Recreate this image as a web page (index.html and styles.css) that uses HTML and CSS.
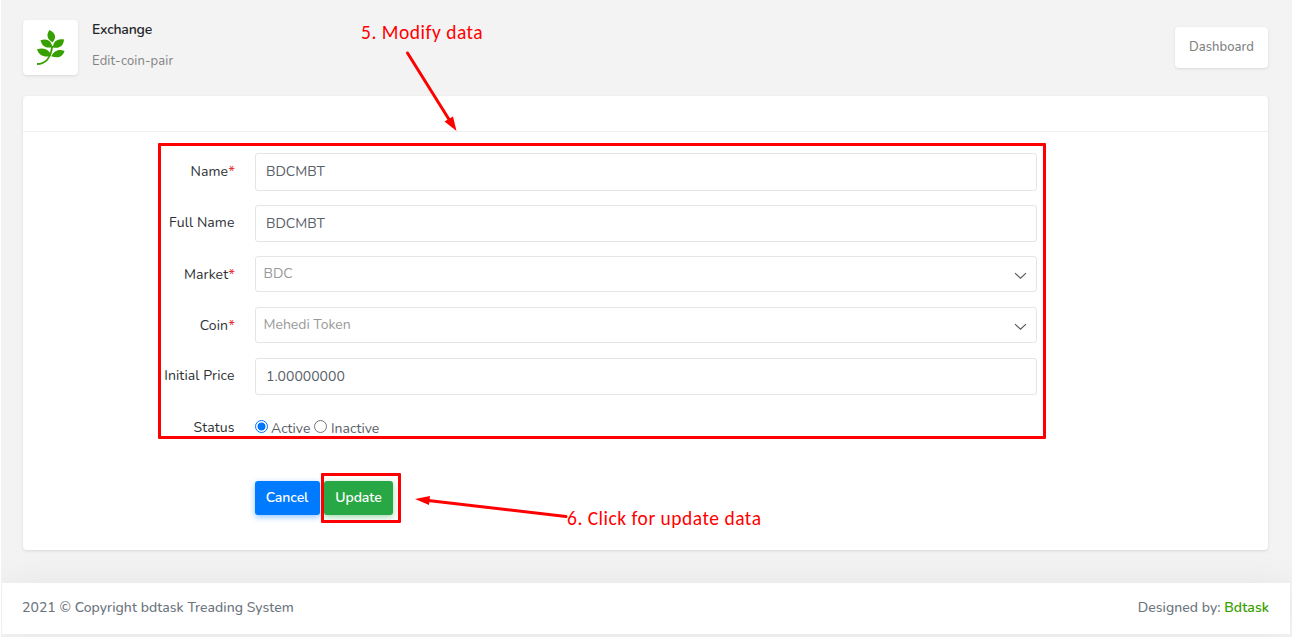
FILE: index.html
```html
<!DOCTYPE html>
<html lang="en">
<head>
<meta charset="utf-8">
<title>Exchange - Edit coin pair</title>
<link rel="stylesheet" href="styles.css">
</head>
<body>
<div class="page">
  <header class="header">
    <div class="brand-icon">
      <svg width="30" height="36" viewBox="0 0 30 36" fill="#37a000">
        <path d="M0 34C8 34 14 28 15.200 16" fill="none" stroke="#37a000" stroke-width="1.900"/>
        <path d="M12.500 0C18.500 3 20 7.500 15.500 12.400C10 9 9 5 12.500 0Z"/>
        <path d="M3.500 10.200C10.500 8 14.700 11 15.200 17.300C8.500 18.500 5 16 3.500 10.200Z"/>
        <path d="M27 9.500C21 8.200 16.200 11 15.800 17.500C22.500 18.800 26.500 16 27 9.500Z"/>
        <path d="M0 19.300C7.500 17 12.800 20 14 26C7 27.800 2 25.500 0 19.300Z"/>
        <path d="M27.500 21C22 18.200 16.500 21 14.200 26.300C21 28.800 25.700 26.800 27.500 21Z"/>
      </svg>
    </div>
    <div class="heading">
      <h1>Exchange</h1>
      <small>Edit-coin-pair</small>
    </div>
    <a class="dashboard">Dashboard</a>
  </header>
  <main class="card">
    <div class="card-head"></div>
    <form class="form">
      <div class="row name"><label>Name<i>*</i></label><div class="input">BDCMBT</div></div>
      <div class="row full"><label>Full Name</label><div class="input">BDCMBT</div></div>
      <div class="row market"><label>Market<i>*</i></label><div class="input select"><span>BDC</span><svg width="13" height="8" viewBox="0 0 13 8"><path d="M1 1.200L6.500 6.200L12 1.200"/></svg></div></div>
      <div class="row coin"><label>Coin<i>*</i></label><div class="input select"><span>Mehedi Token</span><svg width="13" height="8" viewBox="0 0 13 8"><path d="M1 1.200L6.500 6.200L12 1.200"/></svg></div></div>
      <div class="row price"><label>Initial Price</label><div class="input">1.00000000</div></div>
      <div class="row status"><label>Status</label><div class="radios"><b class="radio on"></b><span class="t-active">Active</span><b class="radio"></b><span>Inactive</span></div></div>
      <div class="actions"><a class="btn cancel">Cancel</a><a class="btn update">Update</a></div>
    </form>
  </main>
  <footer class="footer"><span>2021 © Copyright bdtask Treading System</span><span class="t-by">Designed by: <em>Bdtask</em></span></footer>
  <div class="mark form-mark"></div>
  <div class="mark update-mark"></div>
  <svg class="arrows" width="1296" height="639">
    <path d="M407.500 53L450 121M566 516.500L428 500.500"/>
    <polygon points="456.500,131 444.500,121.500 453,116.500"/>
    <polygon points="415,499 430,496 429,505"/>
  </svg>
  <div class="note modify">5. Modify data</div>
  <div class="note click">6. Click for update data</div>
</div>
</body>
</html>
```
FILE: styles.css
```css
* { box-sizing: border-box; }
body { margin: 0; background: #fff; font: 14px/20px Nunito, Lato, sans-serif; color: #212529; }
.page { position: relative; width: 1291px; height: 637px; margin-left: 1px; background: #f3f3f3; overflow: hidden; display: flex; flex-direction: column; }
.header { height: 96px; padding: 20px 24px 0 22px; display: flex; align-items: flex-start; flex: none; }
.brand-icon { width: 55px; height: 55px; background: #fff; border-radius: 4px; box-shadow: 0 1px 3px #0000001c; padding: 10px 0 0 14px; }
.heading { margin-left: 14px; flex: 1; }
h1 { margin: 0; font-size: 14px; line-height: 20px; font-weight: 600; letter-spacing: -.2px; }
small { display: block; margin-top: 11px; font-size: 13px; line-height: 20px; color: #828282; letter-spacing: .13px; }
.dashboard { width: 93px; height: 41px; margin-top: 7px; background: #fff; color: #828282; border-radius: 4px; box-shadow: 0 1px 3px #0000001c; text-align: center; line-height: 40px; font-size: 13px; font-weight: 500; letter-spacing: .05px; }
.card { position: relative; z-index: 1; height: 454px; margin: 0 24px 0 22px; background: #fff; border-radius: 4px; box-shadow: 0 1px 3px #0000001c; flex: none; }
.card-head { height: 36px; border-bottom: 1px solid #f0f0f0; }
.form { padding: 21px 0 0 132px; }
.row { display: flex; align-items: flex-start; }
.row label { width: 80px; height: 20px; margin-top: 8px; padding-right: .5px; text-align: right; white-space: nowrap; letter-spacing: .1px; color: #2d3135; }
.name label, .market label, .coin label { margin-top: 9px; padding-right: 0; }
.row i { color: #e5343d; font-style: normal; font-size: 15px; line-height: 1; position: relative; top: 1px; }
.input { width: 782px; height: 37px; margin-left: 20px; border: 1px solid #e4e5e7; border-radius: 3px; padding: 0 10px; line-height: 35px; color: #5a6068; }
.name, .full { height: 52px; }
.name .input { height: 38px; }
.full { height: 51px; }
.market, .coin { height: 51px; }
.select { height: 36px; display: flex; align-items: center; justify-content: space-between; padding: 0 9px 0 7.5px; color: #999; line-height: 33px; }
.select span { margin-top: -1px; }
.select svg { margin-top: 4px; fill: none; stroke: #555; stroke-width: 1.1; }
.price { height: 52px; }
.radios { display: flex; align-items: center; height: 20px; margin: 9px 0 0 20px; color: #5a6068; }
.radio { width: 13px; height: 13px; border: 1px solid #767676; border-radius: 50%; margin-top: -5px; }
.on { border-color: #0075ff; background: radial-gradient(circle, #0075ff 0 3.7px, #fff 4.3px); }
.radios span { margin-left: 4px; }
.radios .t-active { width: 43px; margin-left: 3px; }
.actions { display: flex; gap: 3px; padding: 19px 0 0 100px; }
.status { height: 52px; }
.btn { height: 34px; border-radius: 3px; color: #fff; line-height: 33px; font-weight: 600; text-align: center; letter-spacing: -.05px; }
.cancel { width: 65px; margin-right: 1px; padding-right: 1px; background: #007bff; box-shadow: 0 2px 6px #007bff70; }
.update { width: 69px; background: #28a745; box-shadow: 0 2px 6px #28a74570; }
.footer { margin: 33px 2px 0 1px; height: 51px; padding: 15px 20px 0 20px; display: flex; justify-content: space-between; flex: none; background: #fff; box-shadow: 0 0 35px #9aa1ab26; color: #6c757d; font-weight: 500; letter-spacing: .05px; }
.t-by { margin-right: 1px; }
.footer em { color: #37a000; font-style: normal; font-weight: 600; }
.mark { position: absolute; z-index: 2; border: 3px solid #f00; border-radius: 1px; }
.form-mark { left: 157px; top: 143px; width: 888px; height: 296px; }
.update-mark { left: 320px; top: 473px; width: 80px; height: 50px; }
.arrows { position: absolute; z-index: 2; left: -1px; top: 0; fill: #f00; }
.arrows path { fill: none; stroke: #f00; stroke-width: 3; stroke-linecap: round; }
.note { position: absolute; z-index: 2; color: #f00; font: 300 19.5px/24px Carlito, Calibri, "Open Sans", sans-serif; white-space: nowrap; letter-spacing: .5px; }
.modify { left: 360px; top: 20px; }
.click { left: 566px; top: 506px; }
```
